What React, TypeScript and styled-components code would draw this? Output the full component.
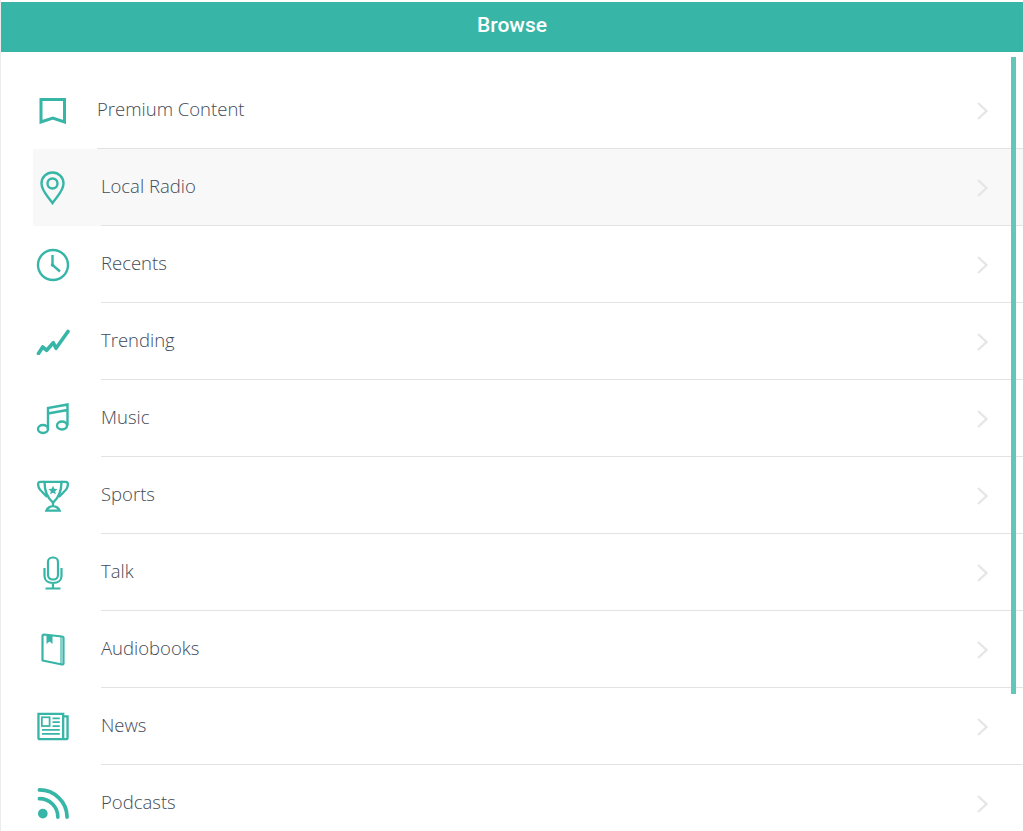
import styled, { createGlobalStyle } from "styled-components";

const TEAL = "#37b5a7";

const GlobalStyle = createGlobalStyle`
  html, body {
    margin: 0;
    padding: 0;
    height: 100%;
    overflow: hidden;
    background: #fff;
  }
`;

const BookmarkIcon = () => (
  <svg width="28" height="26" viewBox="0 0 28 26" fill="none" stroke={TEAL} strokeWidth="3">
    <path d="M2 1.5H25.5V24L13.75 20L2 24Z" />
  </svg>
);

const PinIcon = () => (
  <svg width="26" height="34" viewBox="0 0 26 34" fill="none" stroke={TEAL} strokeWidth="2.4">
    <path d="M12.5 32C8.5 26 1.5 20 1.5 12.5C1.5 6.2 6.5 1.5 12.5 1.5S23.5 6.2 23.5 12.5C23.5 20 16.5 26 12.5 32Z" />
    <circle cx="12.5" cy="12.5" r="5" />
  </svg>
);

const ClockIcon = () => (
  <svg width="34" height="34" viewBox="0 0 34 34" fill="none" stroke={TEAL} strokeWidth="2.4">
    <circle cx="17" cy="17" r="15" />
    <path d="M16.5 7V17L24 23.5" />
    <circle cx="16.5" cy="17" r="1.8" fill={TEAL} stroke="none" />
  </svg>
);

const TrendIcon = () => (
  <svg width="34" height="26" viewBox="0 0 34 26" fill="none" stroke={TEAL} strokeWidth="3.6" strokeLinecap="round" strokeLinejoin="round">
    <path d="M2.5 24.5L6.7 18L10.7 21.3L17.3 13.7L20 19.3L32 2.5" />
  </svg>
);

const MusicIcon = () => (
  <svg width="34" height="34" viewBox="0 0 34 34" fill="none" stroke={TEAL} strokeWidth="2.4">
    <ellipse cx="7" cy="27" rx="5" ry="4" />
    <ellipse cx="26" cy="23.5" rx="5" ry="4" />
    <path d="M12 27V6L31.5 2.5V23.5M12 11.5L31.5 8" />
  </svg>
);

const TrophyIcon = () => (
  <svg width="32" height="32" viewBox="0 0 34 34" fill="none" stroke={TEAL} strokeWidth="2.5">
    <path d="M8 2H26C26 10 24 18 17 24C10 18 8 10 8 2Z" />
    <path d="M8 2H3.5C0 2 1 7 3 10C4.5 12 8 15 11 18M26 2H30.5C34 2 33 7 31 10C29.5 12 26 15 23 18" />
    <path d="M17 24V28M17 27.5C14 28 11 30 10 32.5H24C23 30 20 28 17 27.5Z" />
    <path d="M17 6L18.4 9.2L21.8 9.6L19.3 11.9L20 15.2L17 13.5L14 15.2L14.7 11.9L12.2 9.6L15.6 9.2Z" fill={TEAL} stroke="none" />
  </svg>
);

const MicIcon = () => (
  <svg width="20" height="34" viewBox="0 0 20 34" fill="none" stroke={TEAL} strokeWidth="2.2">
    <rect x="5" y="1.5" width="10" height="22" rx="4.5" />
    <path d="M1.5 12V20C1.5 24.5 5 27 10 27S18.5 24.5 18.5 20V12M10 27V32.5M2.5 32.5H17.5" />
  </svg>
);

const BookIcon = () => (
  <svg width="24" height="33" viewBox="0 0 24 33" fill="none" stroke={TEAL} strokeWidth="2.2" strokeLinejoin="round">
    <path d="M1.5 3V27.5L21 31.5C22 31.5 22.5 31 22.5 30V5C22.5 4 22 3.5 21 3.5L3 1.5C2 1.5 1.5 2 1.5 3Z" />
    <path d="M20 3.5V31" strokeWidth="1.2" />
    <path d="M5.5 2V11L8.5 8.5L11.5 11V3Z" fill={TEAL} stroke="none" />
  </svg>
);

const NewsIcon = () => (
  <svg width="32" height="29" viewBox="0 0 33 29" fill="none" stroke={TEAL} strokeWidth="2.4">
    <path d="M27 4H31.5V26C31.5 27 31 27.5 30 27.5H3C2 27.5 1.5 27 1.5 26V1.5H27V27" />
    <rect x="5" y="5" width="8" height="9" strokeWidth="1.8" />
    <path d="M16 6H23.5M16 10H23.5M16 14H23.5M5 18H23.5M5 22H23.5" strokeWidth="1.8" />
  </svg>
);

const RssIcon = () => (
  <svg width="32" height="33" viewBox="0 0 33 33" fill="none" stroke={TEAL} strokeWidth="3.8" strokeLinecap="round">
    <circle cx="6" cy="27" r="5" fill={TEAL} stroke="none" />
    <path d="M2.5 2.5C18 2.5 31 15 31 30.5" />
    <path d="M2.5 11.5C13 11.5 21.5 20 21.5 30.5" />
  </svg>
);

const Chevron = () => (
  <svg width="11" height="18" viewBox="0 0 11 18" fill="none" stroke="#e6e6e6" strokeWidth="2.4">
    <path d="M1 1L9.5 9L1 17" />
  </svg>
);

type Item = { label: string; icon: React.ReactNode; active?: boolean; narrow?: boolean };

const items: Item[] = [
  { label: "Premium Content", icon: <BookmarkIcon />, narrow: true },
  { label: "Local Radio", icon: <PinIcon />, active: true },
  { label: "Recents", icon: <ClockIcon /> },
  { label: "Trending", icon: <TrendIcon /> },
  { label: "Music", icon: <MusicIcon /> },
  { label: "Sports", icon: <TrophyIcon /> },
  { label: "Talk", icon: <MicIcon /> },
  { label: "Audiobooks", icon: <BookIcon /> },
  { label: "News", icon: <NewsIcon /> },
  { label: "Podcasts", icon: <RssIcon /> },
];

export default function App() {
  return (
    <Page>
      <GlobalStyle />
      <Header>Browse</Header>
      <List>
        {items.map((item) => (
          <Row key={item.label} $active={item.active}>
            <IconCell $narrow={item.narrow}>{item.icon}</IconCell>
            <Body>
              <Label>{item.label}</Label>
              <ChevronCell>
                <Chevron />
              </ChevronCell>
            </Body>
          </Row>
        ))}
      </List>
      <Scrollbar />
    </Page>
  );
}

const Page = styled.div`
  position: relative;
  height: 831px;
  overflow: hidden;
  padding-top: 2px;
  box-sizing: border-box;
  border-left: 1px solid #ececec;
  font-family: "Open Sans", "Liberation Sans", sans-serif;
`;

const Header = styled.div`
  height: 50px;
  padding-bottom: 4px;
  box-sizing: border-box;
  background: ${TEAL};
  color: #fff;
  display: flex;
  align-items: center;
  justify-content: center;
  font-family: "Roboto", sans-serif;
  font-size: 21px;
  font-weight: 500;
`;

const List = styled.div`
  padding-top: 20px;
`;

const Row = styled.div<{ $active?: boolean }>`
  display: flex;
  height: 77px;
  margin-left: 32px;
  background: ${(p) => (p.$active ? "#f8f8f8" : "transparent")};
`;

const IconCell = styled.div<{ $narrow?: boolean }>`
  width: ${(p) => (p.$narrow ? "64px" : "68px")};
  flex: none;
  display: flex;
  align-items: center;
  justify-content: center;
  padding-right: ${(p) => (p.$narrow ? "24px" : "28px")};
  box-sizing: border-box;
`;

const Body = styled.div`
  flex: 1;
  display: flex;
  align-items: center;
  justify-content: space-between;
  border-bottom: 1px solid #e3e3e3;
  box-sizing: border-box;
  padding-right: 35px;
`;

const Label = styled.span`
  font-size: 18.5px;
  font-weight: 300;
  color: #3f4b57;
  padding-bottom: 4px;
`;

const ChevronCell = styled.div`
  display: flex;
  align-items: center;
  padding-top: 2px;
`;

const Scrollbar = styled.div`
  position: absolute;
  top: 57px;
  right: 7px;
  width: 5px;
  height: 637px;
  background: #62c6b8;
`;
